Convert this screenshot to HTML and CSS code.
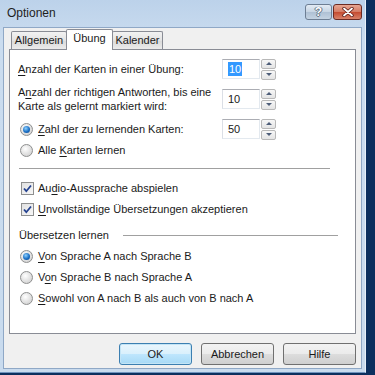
FILE: index.html
```html
<!DOCTYPE html>
<html lang="de">
<head>
    <meta charset="UTF-8">
    <title>Optionen</title>
    <link rel="stylesheet" href="styles.css">
</head>
<body>
    <div class="window">
        <div class="titlebar">
            <span class="title">Optionen</span>
            <div class="caption-buttons">
                <span class="cap help">?</span>
                <span class="cap close">
                    <svg width="14" height="10" viewBox="0 0 14 10">
                        <path d="M3 1.5 L11 8.5 M11 1.5 L3 8.5" stroke="#5a1a14" stroke-width="3.4" stroke-linecap="round"/>
                        <path d="M3 1.5 L11 8.5 M11 1.5 L3 8.5" stroke="#fff" stroke-width="1.8" stroke-linecap="round"/>
                    </svg>
                </span>
            </div>
        </div>

        <div class="client">
            <div class="tabs">
                <div class="tab tab-general">Allgemein</div>
                <div class="tab tab-practice active">Übung</div>
                <div class="tab tab-calendar">Kalender</div>
            </div>

            <div class="panel">
                <div class="row spin-row first">
                    <div class="label"><u>A</u>nzahl der Karten in einer Übung:</div>
                    <div class="spin">
                        <div class="spin-input"><span class="selected">10</span></div>
                        <div class="spin-buttons">
                            <span class="spin-btn up"></span>
                            <span class="spin-btn down"></span>
                        </div>
                    </div>
                </div>

                <div class="row spin-row double">
                    <div class="label">A<u>n</u>zahl der richtigen Antworten, bis eine<br>Karte als gelernt markiert wird:</div>
                    <div class="spin">
                        <div class="spin-input">10</div>
                        <div class="spin-buttons">
                            <span class="spin-btn up"></span>
                            <span class="spin-btn down"></span>
                        </div>
                    </div>
                </div>

                <div class="row spin-row">
                    <div class="label option"><span class="radio checked"></span><span><u>Z</u>ahl der zu lernenden Karten:</span></div>
                    <div class="spin">
                        <div class="spin-input">50</div>
                        <div class="spin-buttons">
                            <span class="spin-btn up"></span>
                            <span class="spin-btn down"></span>
                        </div>
                    </div>
                </div>

                <div class="row option-row tight">
                    <span class="radio"></span><span>Alle <u>K</u>arten lernen</span>
                </div>

                <div class="separator"></div>

                <div class="row option-row after-sep">
                    <span class="check"><svg width="11" height="11" viewBox="0 0 11 11"><path d="M2 5.5 L4.3 8.2 L9 2.5" fill="none" stroke="#23418f" stroke-width="1.8"/></svg></span><span>Au<u>d</u>io-Aussprache abspielen</span>
                </div>
                <div class="row option-row">
                    <span class="check"><svg width="11" height="11" viewBox="0 0 11 11"><path d="M2 5.5 L4.3 8.2 L9 2.5" fill="none" stroke="#23418f" stroke-width="1.8"/></svg></span><span><u>U</u>nvollständige Übersetzungen akzeptieren</span>
                </div>

                <div class="group-label"><span>Übersetzen lernen</span><span class="group-line"></span></div>

                <div class="row option-row">
                    <span class="radio checked"></span><span><u>V</u>on Sprache A nach Sprache B</span>
                </div>
                <div class="row option-row">
                    <span class="radio"></span><span>V<u>o</u>n Sprache B nach Sprache A</span>
                </div>
                <div class="row option-row">
                    <span class="radio"></span><span><u>S</u>owohl von A nach B als auch von B nach A</span>
                </div>
            </div>

            <div class="buttons">
                <button class="btn default">OK</button>
                <button class="btn">Abbrechen</button>
                <button class="btn">Hilfe</button>
            </div>
        </div>
    </div>
</body>
</html>
```

FILE: styles.css
```css
body {
    margin: 0;
    background-color: #0c2f5e;
    font-family: "Liberation Sans", Arial, sans-serif;
    font-size: 11px;
    color: #1a1a1a;
}
.window {
    width: 359px;
    height: 369px;
    padding: 0 3px 3px 3px;
    background: linear-gradient(to bottom, #bcd2ea, #cadcef 40px, #c9dbee);
    border-right: 1px solid #e7f0f9;
    border-bottom: 1px solid #6f93bd;
    display: flex;
    flex-direction: column;
}
.titlebar {
    height: 27px;
    flex-shrink: 0;
    display: flex;
    align-items: flex-start;
    justify-content: space-between;
}
.title {
    font-size: 12px;
    color: #1e1e1e;
    margin: 6px 0 0 4px;
}
.caption-buttons {
    display: flex;
    gap: 1px;
    margin-top: 4px;
}
.cap {
    height: 14px;
    border: 1px solid #6d7e93;
    border-radius: 3px;
    display: flex;
    align-items: center;
    justify-content: center;
}
.help {
    width: 25px;
    background: linear-gradient(to bottom, #e3ebf4, #c6d4e3 50%, #aec0d4 51%, #c4d3e2);
    color: #fff;
    font-weight: bold;
    font-size: 12px;
    text-shadow: 0 0 1px #4f5e70, 1px 0 0 #6a7a8c, -1px 0 0 #6a7a8c, 0 1px 0 #6a7a8c;
}
.close {
    width: 27px;
    border-color: #6b2a22;
    background: linear-gradient(to bottom, #e8a692, #d47a63 50%, #c44a2f 51%, #d9826a);
}
.client {
    flex: 1;
    min-height: 0;
    background-color: #f0f0f0;
    border: 1px solid #8fa8c6;
    padding: 1px 5px 0 5px;
    display: flex;
    flex-direction: column;
}
.tabs {
    height: 21px;
    flex-shrink: 0;
    display: flex;
    align-items: flex-end;
    padding-left: 2px;
    margin-bottom: -1px;
    position: relative;
}
.tab {
    box-sizing: border-box;
    height: 18px;
    line-height: 17px;
    text-align: center;
    border: 1px solid #898c95;
    border-bottom: none;
    border-radius: 2px 2px 0 0;
    background: linear-gradient(to bottom, #f2f2f2, #e3e3e3 50%, #d9d9d9 51%, #ebebeb);
    margin-bottom: 1px;
}
.tab-general {
    width: 56px;
    margin-right: -1px;
}
.tab-practice {
    width: 47px;
}
.tab-calendar {
    width: 51px;
    margin-left: -1px;
}
.tab.active {
    height: 21px;
    line-height: 16px;
    background: #fff;
    margin-bottom: 0;
    position: relative;
    z-index: 1;
}
.panel {
    box-sizing: border-box;
    height: 285px;
    flex-shrink: 0;
    background: #fff;
    border: 1px solid #898c95;
    padding: 9px 0 0 8px;
}
.row {
    display: flex;
    align-items: center;
    white-space: nowrap;
}
.spin-row {
    height: 20px;
    margin-top: 6px;
}
.spin-row.first {
    margin-top: 0;
}
.spin-row.double {
    height: 28px;
    margin-top: 6px;
}
.label {
    width: 204px;
    line-height: 14px;
}
.label.option {
    display: flex;
    align-items: center;
}
.spin {
    display: flex;
    gap: 1px;
}
.spin-input {
    width: 31px;
    height: 18px;
    line-height: 18px;
    padding-left: 5px;
    border: 1px solid #e3e9ef;
    border-top-color: #abadb3;
    border-left-color: #dbdfe6;
}
.selected {
    background: #3399ff;
    color: #fff;
    padding: 1px 1px;
}
.spin-buttons {
    display: flex;
    flex-direction: column;
    gap: 1px;
}
.spin-btn {
    width: 13px;
    height: 8px;
    border: 1px solid #b8b8b8;
    border-radius: 2px;
    background: linear-gradient(to bottom, #f7f7f7, #e4e4e4);
    display: flex;
    align-items: center;
    justify-content: center;
}
.spin-btn::after {
    content: "";
    border-left: 3px solid transparent;
    border-right: 3px solid transparent;
}
.spin-btn.up::after {
    border-bottom: 3px solid #4d5d78;
}
.spin-btn.down::after {
    border-top: 3px solid #4d5d78;
}
.option-row {
    height: 18px;
    margin-top: 3px;
}
.option-row.tight {
    margin-top: 2px;
}
.option-row.after-sep {
    margin-top: 10px;
}
.radio {
    width: 11px;
    height: 11px;
    border: 1px solid #8e8f8f;
    border-radius: 50%;
    background: radial-gradient(circle at 40% 35%, #ffffff, #e6e6e6 45%, #c9c9c9);
    margin: 0 5px 0 2px;
    display: flex;
    align-items: center;
    justify-content: center;
    flex-shrink: 0;
}
.radio.checked::after {
    content: "";
    width: 7px;
    height: 7px;
    border-radius: 50%;
    background: radial-gradient(circle at 40% 35%, #8fd1ff, #1a6fc4 55%, #0c3f86);
}
.check {
    width: 11px;
    height: 11px;
    border: 1px solid #8e8f8f;
    background: linear-gradient(135deg, #e1e1e1, #f7f7f7);
    margin: 0 4px 0 3px;
    display: flex;
    flex-shrink: 0;
}
.separator {
    height: 1px;
    background: #a0a0a0;
    margin: 9px 25px 0 1px;
}
.group-label {
    height: 18px;
    margin-top: 8px;
    display: flex;
    align-items: center;
    margin-right: 17px;
    margin-left: 1px;
}
.group-line {
    flex: 1;
    height: 1px;
    background: #a0a0a0;
    margin-left: 14px;
}
u {
    text-decoration: underline;
    text-underline-offset: 2px;
}
.buttons {
    display: flex;
    justify-content: flex-end;
    gap: 9px;
    margin-top: 9px;
}
.btn {
    width: 73px;
    height: 22px;
    font-family: "Liberation Sans", Arial, sans-serif;
    font-size: 11px;
    color: #1a1a1a;
    border: 1px solid #707070;
    border-radius: 3px;
    background: linear-gradient(to bottom, #f2f2f2, #ebebeb 50%, #dddddd 51%, #cfcfcf);
    padding: 0;
}
.btn.default {
    border-color: #3c7fb1;
    background: linear-gradient(to bottom, #eaf6fd, #d9f0fc 50%, #bee6fd 51%, #a7d9f5);
    box-shadow: inset 0 0 0 1px #c4e5f6;
}
```
